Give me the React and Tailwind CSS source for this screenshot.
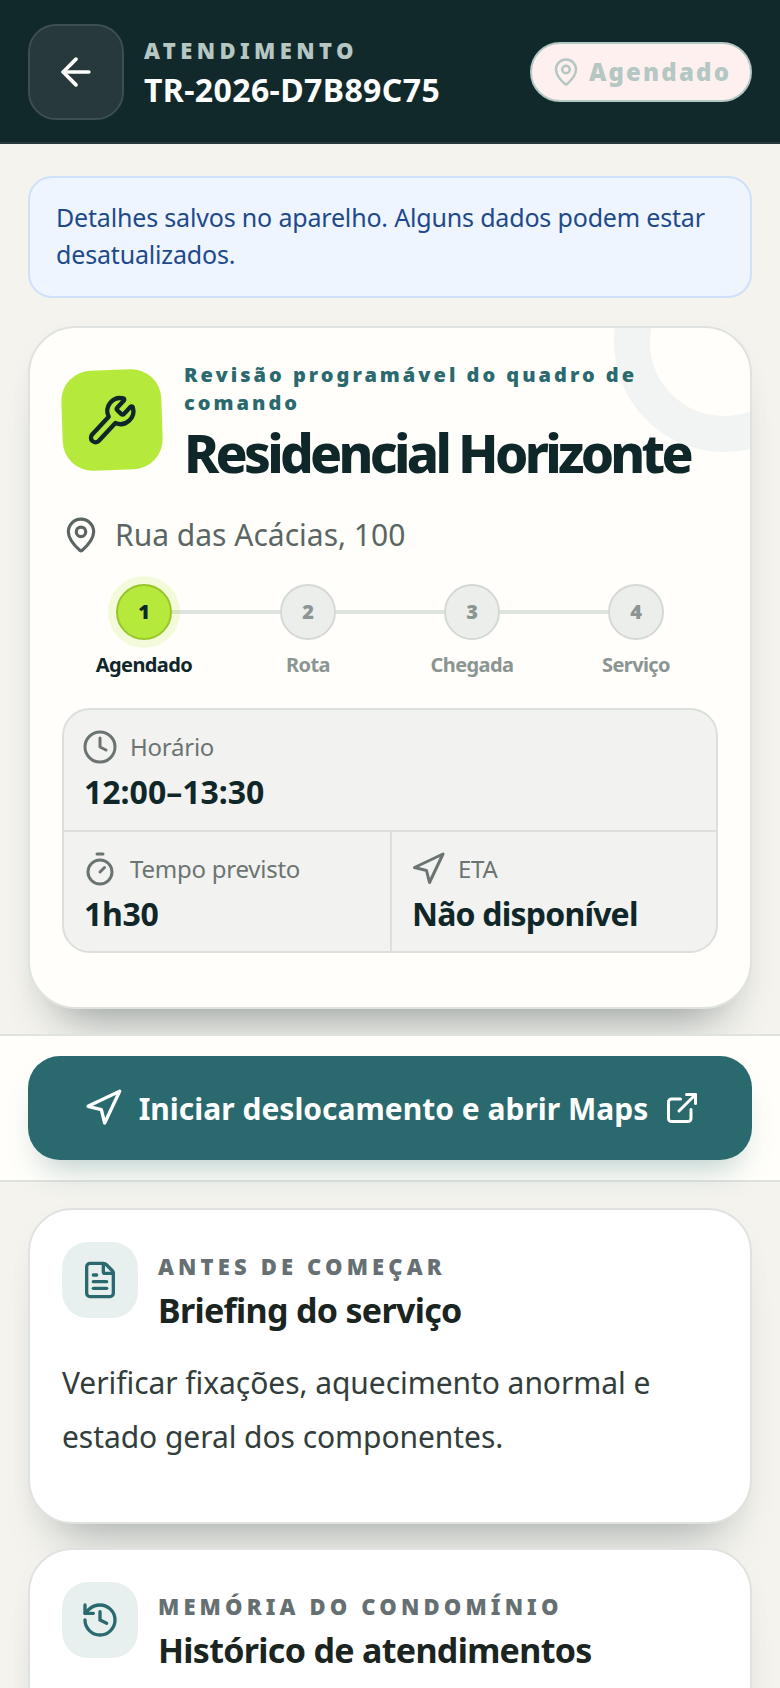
import React from 'react';
import { ArrowLeft, MapPin, Wrench, Clock, Timer, Navigation, ExternalLink, FileText, History } from 'lucide-react';

const steps = [
  { n: 1, label: 'Agendado', active: true },
  { n: 2, label: 'Rota' },
  { n: 3, label: 'Chegada' },
  { n: 4, label: 'Serviço' },
];

function InfoCell({ icon: Icon, label, value, className, valueClass }) {
  return (
    <div className={`px-[20px] pt-[21px] ${className}`}>
      <div className="flex h-[32px] items-center gap-[12px] text-[24px] leading-[32px] tracking-[-0.01em] text-[#6b7472]">
        <Icon size={36} strokeWidth={2} className="-ml-[2px] shrink-0" />
        <span>{label}</span>
      </div>
      <div className={`mt-[7px] text-[32px] leading-[44px] font-bold text-[#10272a] ${valueClass}`}>{value}</div>
    </div>
  );
}

function SectionCard({ icon: Icon, kicker, title, children }) {
  return (
    <section className="rounded-[44px] border-2 border-[#dfe2de] bg-white px-[32px] pt-[32px] pb-[58px] shadow-[0_40px_48px_-32px_rgba(18,41,44,0.34),0_8px_24px_rgba(18,41,44,0.03)]">
      <div className="flex gap-[20px]">
        <div className="flex h-[76px] w-[76px] shrink-0 items-center justify-center rounded-[26px] bg-[#e7f0ee] text-[#2a6a6e]">
          <Icon size={40} strokeWidth={2} />
        </div>
        <div>
          <div className="mt-[9px] text-[22px] leading-[30px] font-black tracking-[0.188em] text-[#667072]">{kicker}</div>
          <h2 className="mt-[6px] text-[34px] leading-[46px] font-bold tracking-[-0.02em] text-[#1a2421]">{title}</h2>
        </div>
      </div>
      {children}
    </section>
  );
}

export default function App() {
  return (
    <div className="h-[1688px] overflow-hidden bg-[#f4f3ee] font-['Noto_Sans',sans-serif]">
      <header className="flex h-[144px] items-center justify-between border-b-2 border-[#26393c] bg-[#12292c] px-[28px] pt-[2px]">
        <div className="flex items-center gap-[20px]">
          <button className="flex h-[96px] w-[96px] items-center justify-center rounded-[28px] border-2 border-[#3c4e50] bg-[#27393c] text-white">
            <ArrowLeft size={44} strokeWidth={2} />
          </button>
          <div className="pt-[1px]">
            <div className="text-[22px] leading-[30px] font-black tracking-[0.2em] text-[#b5c7c2]">ATENDIMENTO</div>
            <div className="mt-[4px] text-[32px] leading-[42px] font-bold tracking-[0.012em] text-white">TR-2026-D7B89C75</div>
          </div>
        </div>
        <div className="flex h-[60px] w-[222px] items-center justify-center gap-[8px] rounded-full border-2 border-[#b5c7c2] bg-[#fff0f0] text-[#b5c7c2]">
          <MapPin size={30} strokeWidth={2} />
          <span className="text-[24px] font-black tracking-[0.09em]">Agendado</span>
        </div>
      </header>

      <main className="px-[28px] pt-[32px]">
        <div className="rounded-[24px] border-2 border-[#cfe0fb] bg-[#eef5ff] px-[26px] pt-[21px] pb-[23px] text-[25px] leading-[37px] tracking-[-0.007em] text-[#1e4a8c]">
          Detalhes salvos no aparelho. Alguns dados podem estar desatualizados.
        </div>

        <section className="relative mt-[28px] h-[683px] overflow-hidden rounded-[48px] border-2 border-[#dfe2de] bg-[#fffefa] px-[32px] pt-[42px] shadow-[0_40px_48px_-32px_rgba(18,41,44,0.42),0_8px_24px_rgba(18,41,44,0.03)]">
          <div className="absolute right-[-84px] top-[-96px] h-[220px] w-[220px] rounded-full border-[36px] border-[#f2f4f3]" />
          <div className="relative flex gap-[22px]">
            <div className="flex h-[100px] w-[100px] shrink-0 -rotate-2 items-center justify-center rounded-[30px] bg-[#b5e93b] text-[#10272a]">
              <Wrench size={52} strokeWidth={2} />
            </div>
            <div className="-mt-[9px]">
              <div className="text-[20px] leading-[28px] font-black tracking-[0.15em] text-[#2a6a6e]">
                Revisão programável do quadro de comando
              </div>
              <h1 className="mt-[5px] text-[53px] leading-[62px] font-extrabold tracking-[-0.07em] text-[#10272a]">Residencial Horizonte</h1>
            </div>
          </div>

          <div className="relative mt-[30px] flex items-center gap-[15px] text-[30px] leading-[42px] text-[#5b6664]">
            <MapPin size={38} strokeWidth={2} className="shrink-0" />
            <span>Rua das Acácias, 100</span>
          </div>

          <div className="relative mt-[28px] grid grid-cols-4">
            <div className="absolute left-[82px] right-[82px] top-[26px] h-[4px] bg-[#dfe3de]" />
            {steps.map((s) => (
              <div key={s.n} className="relative flex flex-col items-center">
                <div
                  className={
                    s.active
                      ? 'flex h-[56px] w-[56px] items-center justify-center rounded-full border-2 border-[#97c62c] bg-[#b5e93b] text-[20px] font-black text-[#10272a] shadow-[0_0_0_8px_rgba(181,233,59,0.16)]'
                      : 'flex h-[56px] w-[56px] items-center justify-center rounded-full border-2 border-[#d5d9d5] bg-[#eceeeb] text-[20px] font-black text-[#8b9592]'
                  }
                >
                  {s.n}
                </div>
                <div className={`mt-[11px] text-[20px] leading-[28px] font-bold tracking-[-0.03em] ${s.active ? 'text-[#10272a]' : 'text-[#8b9592]'}`}>
                  {s.label}
                </div>
              </div>
            ))}
          </div>

          <div className="relative mt-[29px] grid grid-cols-2 overflow-hidden rounded-[28px] border-2 border-[#dcdfdb] bg-[#f2f3f0]">
            <InfoCell icon={Clock} label="Horário" value="12:00–13:30" valueClass="tracking-normal" className="col-span-2 border-b-2 border-[#dcdfdb] pb-[16px]" />
            <InfoCell icon={Timer} label="Tempo previsto" value="1h30" valueClass="tracking-[-0.01em]" className="pb-[15px]" />
            <InfoCell icon={Navigation} label="ETA" value="Não disponível" valueClass="tracking-[-0.025em]" className="border-l-2 border-[#dcdfdb] pb-[15px]" />
          </div>
        </section>
      </main>

      <div className="relative z-10 mt-[25px] border-y-2 border-[#e0e2de] bg-[#fffefa] px-[28px] py-[20px]">
        <button className="flex h-[104px] w-full items-center justify-center gap-[16px] rounded-[32px] bg-[#2a6a6e] pl-[3px] text-[30px] font-bold text-white shadow-[0_20px_32px_-14px_rgba(42,106,110,0.35)]">
          <Navigation size={40} strokeWidth={2} />
          <span>Iniciar deslocamento e abrir Maps</span>
          <ExternalLink size={36} strokeWidth={2} />
        </button>
      </div>

      <div className="flex flex-col gap-[24px] px-[28px] pt-[26px]">
        <SectionCard icon={FileText} kicker="ANTES DE COMEÇAR" title="Briefing do serviço">
          <p className="mt-[23px] text-[30px] leading-[54px] tracking-[-0.002em] text-[#333d3b]">
            Verificar fixações, aquecimento anormal e estado geral dos componentes.
          </p>
        </SectionCard>
        <SectionCard icon={History} kicker="MEMÓRIA DO CONDOMÍNIO" title="Histórico de atendimentos" />
      </div>
    </div>
  );
}
